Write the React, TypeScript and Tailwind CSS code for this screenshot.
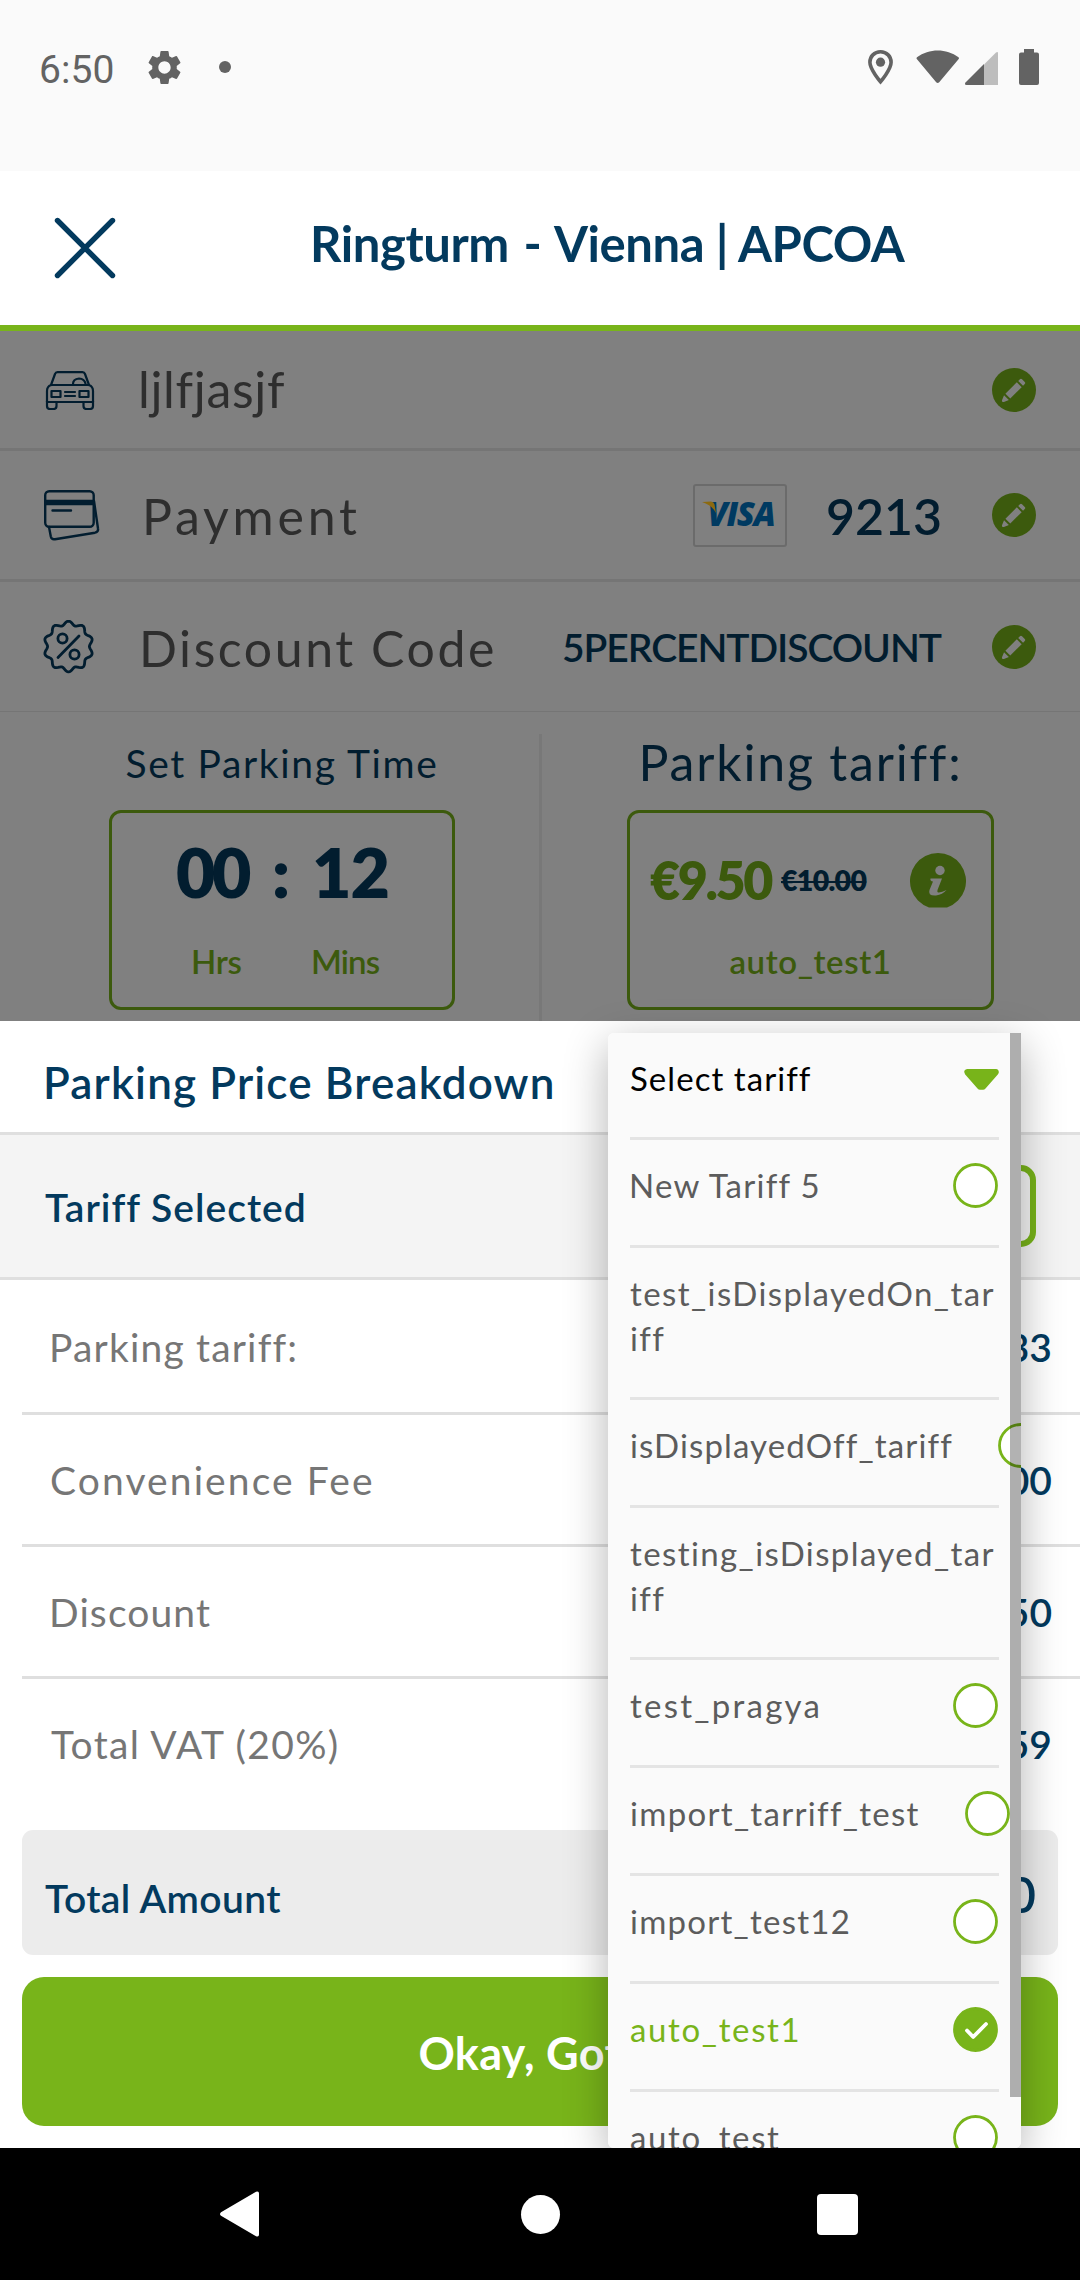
import type { ReactNode } from "react";
import { MdSettings } from "react-icons/md";

const badgePath =
  Array.from({ length: 120 }, (_, i) => {
    const a = (i / 120) * Math.PI * 2;
    const r = 22.8 + 1.9 * Math.cos(10 * a);
    return `${i ? "L" : "M"}${(25.5 + r * Math.sin(a)).toFixed(2)} ${(26.5 - r * 1.03 * Math.cos(a)).toFixed(2)}`;
  }).join("") + "Z";

function StatusBar() {
  return (
    <div className="flex h-[171px] items-start bg-[#fafafa] text-[#636363]">
      <span className="ml-[39px] mt-[46px] w-[105px] font-['Roboto'] text-[39px] leading-[48px] tracking-[0.1px]">6:50</span>
      <MdSettings className="mt-[47px] size-[41px]" />
      <span className="ml-[34px] mt-[61px] size-3 rounded-full bg-[#636363]" />
      <svg className="ml-auto mt-[49px] h-[36px] w-[171px]" viewBox="868 49 171 36" fill="none">
        <path d="M880.5 51.8c-6.2 0-10.6 4.7-10.6 10.5 0 7.2 10.6 19.4 10.6 19.4s10.6-12.2 10.6-19.4c0-5.8-4.4-10.5-10.6-10.5Z" stroke="#636363" strokeWidth="3.6" />
        <circle cx="880.5" cy="62.2" r="4.6" fill="#636363" />
        <path d="M917 57.2c12-9 29.500-9 41.500 0q.8.8.2 1.800l-19.500 23.300q-1.500 1.500-3 0l-19.400-23.300q-.6-1 .2-1.800Z" fill="#636363" />
        <path d="M984 85V64.500L996 52.600q2-1.500 2 .8V85Z" fill="#bdbdbd" />
        <path d="M966.500 85q-2.500-.5-1-2.500L984 64V85Z" fill="#636363" />
        <path d="M1024 49h10v3.500h3q2 0 2 2V83q0 2-2 2h-16q-2 0-2-2V54.500q0-2 2-2h3Z" fill="#636363" />
      </svg>
      <span className="w-[41px]" />
    </div>
  );
}

function Header() {
  return (
    <div className="flex h-[160px] items-center border-b-[6px] border-[#78b41a] bg-white">
      <svg className="ml-[54px] size-[62px]" viewBox="0 0 62 62" stroke="#033a5e" strokeWidth="5.4" strokeLinecap="round">
        <path d="M3.500 3.500 58.500 58.500M58.500 3.500 3.500 58.500" />
      </svg>
      <h1 className="-mt-[9px] ml-[194px] whitespace-nowrap text-[49px] font-bold tracking-[-0.42px] text-[#033a5e]">
        Ringturm <span className="px-[3px]">-</span> Vienna | APCOA
      </h1>
    </div>
  );
}

function EditButton() {
  return (
    <svg className="mr-[44px] size-[44px] shrink-0" viewBox="0 0 45 45">
      <circle cx="22.500" cy="22.500" r="22.500" fill="#3c5a0d" />
      <g transform="rotate(-45 21.500 23.500)" fill="#808080">
        <path d="M6 23.500q0-1 1-1.300L12 20v7l-5-2.200q-1-.3-1-1.300Z" />
        <path d="M14 20h16.500v7H14Z" />
        <path d="M32.500 20h2.500q1.500 0 1.500 1.500v4q0 1.500-1.500 1.500h-2.500Z" />
      </g>
    </svg>
  );
}

function CarIcon() {
  return (
    <svg className="ml-[45px] h-[40px] w-[50px]" viewBox="0 0 50 40" fill="none" stroke="#021d2f" strokeWidth="2.200" strokeLinejoin="round" strokeLinecap="round">
      <path d="M6 15 10 4q.6-1.800 2.500-1.800h25q1.800 0 2.500 1.800l4 11M6 15h38M6 15q-4 1.500-4 6v11h46V21q0-4.500-4-6" />
      <path d="M2 31v5q0 3 3 3h3.500q3 0 3-3v-4M48 31v5q0 3-3 3h-3.500q-3 0-3-3v-4" />
      <path d="M28 14q0-5 6-5.500 5.500.3 6.500 5M6.500 21h9v6h-9ZM34.500 21h9v6h-9ZM20 22h10M20 26h10" />
    </svg>
  );
}

function CardsIcon() {
  return (
    <svg className="ml-[43px] h-[52px] w-[57px]" viewBox="0 0 57 52" fill="none" stroke="#021d2f" strokeWidth="2.400" strokeLinejoin="round" strokeLinecap="round">
      <rect x="2.200" y="2.200" width="48.500" height="35.500" rx="4" />
      <path d="M2 13.500h49" strokeWidth="5.500" strokeLinecap="butt" />
      <path d="M9.500 21.500H28M6 38l1.800 9.500q.8 3.300 4.200 2.700l40-6.500q3.600-.8 3-4.200L51 12" />
    </svg>
  );
}

function DiscountIcon() {
  return (
    <svg className="ml-[43px] h-[54px] w-[51px]" viewBox="0 0 51 54" fill="none" stroke="#021d2f" strokeWidth="2.800" strokeLinejoin="round" strokeLinecap="round">
      <path d={badgePath} />
      <path d="M15 37.500 36 16" />
      <circle cx="19.500" cy="18.500" r="4.600" />
      <circle cx="31.500" cy="34.500" r="4.600" />
    </svg>
  );
}

function VisaCard() {
  return (
    <div className="relative ml-auto flex h-[63px] w-[94px] items-center justify-center rounded-[3px] border-2 border-[#6b6b6b]">
      <span className="-mt-[4px] pl-[2px] font-['Open_Sans'] text-[33px] font-extrabold italic leading-none tracking-[-1.4px] text-[#003a61]">VISA</span>
      <svg className="absolute left-[7px] top-[15px] h-3 w-4" viewBox="0 0 16 12">
        <path d="M0 1 9 .5q3 .3 3.500 3L14 12Q10 4 0 1Z" fill="#8c6a10" />
      </svg>
    </div>
  );
}

function SummaryColumns() {
  return (
    <div className="flex h-[309px]">
      <div className="flex w-[539px] flex-col items-center pl-[25px]">
        <div className="flex h-[98px] items-center pt-[4px] text-[39px] tracking-[1.64px] text-[#021d2f]">Set Parking Time</div>
        <div className="h-[200px] w-[346px] rounded-xl border-[3px] border-[#3c5a0d]">
          <div className="flex h-[118px] items-center pl-[64px] text-[68px] font-extrabold text-[#021d2f]">
            <span className="w-[74px] tracking-[-3.4px]">00</span>
            <span className="w-[62px] text-center">:</span>
            <span className="tracking-[-1px]">12</span>
          </div>
          <div className="flex h-[62px] items-center pl-[79px] text-[33px] font-semibold text-[#3c5a0d]">
            <span className="w-[120px] tracking-[-0.3px]">Hrs</span>
            <span className="tracking-[-0.9px]">Mins</span>
          </div>
        </div>
      </div>
      <div className="mt-[22px] w-[3px] bg-[#787878]" />
      <div className="flex w-[537px] flex-col items-center">
        <div className="flex h-[98px] items-center pr-[20px] pt-[3px] text-[50px] tracking-[1.8px] text-[#021d2f]">Parking tariff:</div>
        <div className="h-[200px] w-[367px] rounded-xl border-[3px] border-[#3c5a0d]">
          <div className="flex h-[134px] items-center pl-[20px]">
            <span className="w-[131px] text-[52px] font-extrabold tracking-[-2.4px] text-[#3c5a0d]">€9.50</span>
            <span className="text-[28.5px] font-extrabold tracking-[-0.7px] text-[#021d2f] line-through decoration-2">€10.00</span>
            <svg className="ml-auto mr-[25px] size-[56px]" viewBox="0 0 56 56">
              <path d="M19 55.500A28 28 0 1 1 37 55.500Z" fill="#3c5a0d" />
              <circle cx="30" cy="18.500" r="4.700" fill="#808080" />
              <path d="M20.500 26.500h11.500l-4.500 11.500q-.8 3 1.500 2.500 3-.5 7.500-2.500-4 4.500-10.500 5.500-8.500.5-6.500-5.500l3.500-8.500q-3.200-.5-2.500-3Z" fill="#808080" />
            </svg>
          </div>
          <div className="flex h-[30px] items-center justify-center text-[33px] font-semibold tracking-[0.6px] text-[#3c5a0d]">auto_test1</div>
        </div>
      </div>
    </div>
  );
}

function PriceRow({ label, value, first, last }: { label: ReactNode; value: string; first?: boolean; last?: boolean }) {
  return (
    <div className={`ml-[22px] flex items-center justify-between pl-[27px] pr-[28px] pt-[2px] ${first ? "h-[135px]" : last ? "h-[129px]" : "h-[132px]"} ${last ? "" : "border-b-[3px] border-[#dfdfdf]"}`}>
      {label}
      <span className="text-[39px] font-semibold text-[#033a5e]">{value}</span>
    </div>
  );
}

function Radio({ checked }: { checked?: boolean }) {
  return (
    <svg className="mr-px size-[45px] shrink-0" viewBox="0 0 45 45" fill="none">
      <circle cx="22.500" cy="22.500" r="21" fill={checked ? "#78b41a" : "#ffffff"} stroke="#78b41a" strokeWidth="2.800" />
      {checked && <path d="m14 23.500 6.200 6.500L33 17" stroke="#ffffff" strokeWidth="3.800" strokeLinecap="round" strokeLinejoin="round" />}
    </svg>
  );
}

const options: { lines: string[]; className: string; radio?: boolean; checked?: boolean }[] = [
  { lines: ["New Tariff 5"], className: "tracking-[1.25px] -ml-px mr-px", radio: true },
  { lines: ["test_isDisplayedOn_tar", "iff"], className: "tracking-[1.43px]" },
  { lines: ["isDisplayedOff_tariff"], className: "tracking-[1.14px]", radio: true },
  { lines: ["testing_isDisplayed_tar", "iff"], className: "tracking-[1.4px]" },
  { lines: ["test_pragya"], className: "tracking-[2.26px]", radio: true },
  { lines: ["import_tarriff_test"], className: "tracking-[1.3px]", radio: true },
  { lines: ["import_test12"], className: "tracking-[1.25px]", radio: true },
  { lines: ["auto_test1"], className: "tracking-[1.65px]", radio: true, checked: true },
  { lines: ["auto_test"], className: "tracking-[1.65px]", radio: true },
];

function TariffMenu() {
  return (
    <div className="absolute left-[608px] top-[1033px] h-[1115px] w-[413px] rounded-[6px] shadow-[0_12px_44px_rgba(0,0,0,0.3)]">
      <div className="relative h-full overflow-hidden rounded-bl-[6px] rounded-br-[6px] rounded-tl-[6px] bg-[#fafafa] pl-[22px] text-[33px] leading-[45px] text-[#5c5c5c]">
        <div className="flex h-[107px] w-[369px] items-start justify-between border-b-[3px] border-[#e4e4e4] pt-[23px]">
          <span className="tracking-[1.05px] text-black">Select tariff</span>
          <svg className="mt-[13px] h-[21px] w-[35px]" viewBox="0 0 35 21">
            <path d="M3 0h29q3 .5 2.800 3.500-.2 1-1 2L21.500 19.500q-1 1.200-2.500 1.200h-3q-1.500 0-2.500-1.200L1.200 5.500Q-1.500 1 3 0Z" fill="#78b41a" />
          </svg>
        </div>
        {options.map((o) => (
          <div
            key={o.lines[0]}
            className={`flex w-[369px] items-start justify-between border-b-[3px] border-[#e4e4e4] pt-[23px] ${o.lines.length > 1 ? "h-[152px]" : "h-[108px]"} ${o.checked ? "text-[#78b41a]" : ""}`}
          >
            <span className={`shrink-0 whitespace-nowrap ${o.className}`}>
              {o.lines.map((l) => (
                <span key={l} className="block">{l}</span>
              ))}
            </span>
            {o.radio && <span className="ml-[45px] shrink-0"><Radio checked={o.checked} /></span>}
          </div>
        ))}
        <div className="absolute right-0 top-0 h-[1064px] w-[11px] bg-black/30" />
      </div>
    </div>
  );
}

function NavBar() {
  return (
    <div className="relative z-10 flex h-[132px] items-center bg-black">
      <svg className="ml-[220px] h-[46px] w-[40px]" viewBox="0 0 40 46" fill="#fff">
        <path d="M1 21.200 36 .8q3-1.200 3 1.700v41q0 2.900-3 1.700L1 24.800q-2-1.800 0-3.600Z" />
      </svg>
      <span className="ml-[261px] size-[39px] rounded-full bg-white" />
      <span className="ml-[257px] size-[41px] rounded-[4px] bg-white" />
    </div>
  );
}

export default function App() {
  return (
    <div className="relative h-[2280px] w-[1080px] overflow-hidden bg-white font-['Lato',sans-serif]">
      <StatusBar />
      <Header />
      <div className="h-[690px] bg-[#808080]">
        <div className="flex h-[120px] items-center justify-between border-b-[3px] border-[#757575]">
          <div className="flex items-center">
            <CarIcon />
            <span className="ml-[43px] text-[50px] tracking-[0.66px] text-[#2e2e2e]">ljlfjasjf</span>
          </div>
          <EditButton />
        </div>
        <div className="flex h-[131px] items-center border-b-[3px] border-[#757575]">
          <CardsIcon />
          <span className="ml-[42px] mt-[2px] text-[50px] tracking-[3.78px] text-[#2e2e2e]">Payment</span>
          <VisaCard />
          <span className="ml-[39px] mt-[2px] w-[166px] text-[50px] font-semibold text-[#021d2f]">9213</span>
          <EditButton />
        </div>
        <div className="flex h-[130px] items-center border-b border-[#757575]">
          <DiscountIcon />
          <span className="ml-[45px] mt-[4px] text-[50px] tracking-[2.55px] text-[#2e2e2e]">Discount Code</span>
          <span className="ml-auto mt-[2px] w-[430px] text-[39px] font-semibold tracking-[-1.05px] text-[#021d2f]">5PERCENTDISCOUNT</span>
          <EditButton />
        </div>
        <SummaryColumns />
      </div>
      <div className="h-[1127px] bg-white">
        <div className="flex h-[114px] items-center border-b-[3px] border-[#dfdfdf] pl-[43px] pt-[11px] text-[44px] font-semibold tracking-[1.15px] text-[#033a5e]">
          Parking Price Breakdown
        </div>
        <div className="flex h-[145px] items-center justify-between border-b-[3px] border-[#dfdfdf] bg-[#f4f4f4] pl-[45px] pr-[44px]">
          <span className="pt-[2px] text-[39px] font-semibold tracking-[1px] text-[#033a5e]">Tariff Selected</span>
          <div className="h-[82px] w-[400px] rounded-[15px] border-[6px] border-[#78b41a]" />
        </div>
        <PriceRow first value="€8.33" label={<span className="text-[39px] tracking-[1.18px] text-[#767676]">Parking tariff:</span>} />
        <PriceRow value="€0.00" label={<span className="pl-px text-[39px] tracking-[2.1px] text-[#767676]">Convenience Fee</span>} />
        <PriceRow value="-€0.50" label={<span className="text-[39px] tracking-[1.12px] text-[#767676]">Discount</span>} />
        <PriceRow last value="€1.59" label={<span className="pl-[2px] text-[39px] tracking-[1.35px] text-[#767676]">Total VAT (20%)</span>} />
        <div className="mx-[22px] mt-[22px] flex h-[125px] items-center justify-between rounded-[11px] bg-[#ececec] pl-[23px] pr-[22px] text-[#033a5e]">
          <span className="pt-[11px] text-[39px] font-semibold tracking-[0.38px]">Total Amount</span>
          <span className="pt-[3px] text-[50px] font-semibold">€9.50</span>
        </div>
        <div className="mx-[22px] mt-[22px] flex h-[149px] items-center justify-center rounded-[22px] bg-[#78b41a] pt-[5px] text-[45px] font-bold tracking-[0.3px] text-white">
          Okay, Got it
        </div>
      </div>
      <TariffMenu />
      <NavBar />
    </div>
  );
}
